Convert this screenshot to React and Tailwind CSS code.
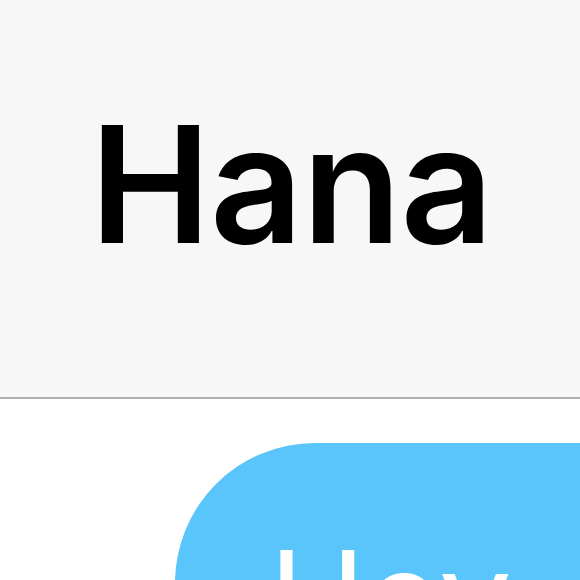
export default function App() {
  return (
    <div className="w-[580px] h-[580px] overflow-hidden bg-white" style={{ fontFamily: "Inter, 'Noto Sans', sans-serif" }}>
      <header className="bg-[#f7f7f8] border-b-2 border-[#b0b0b2] h-[399px] pl-[90px] pt-[103px]">
        <h1 className="text-[162px] leading-none font-semibold text-black tracking-[-0.005em]">Hana</h1>
      </header>
      <div className="pt-[44px] pl-[175px]">
        <div className="bg-[#5ac5fa] rounded-[160px] w-[700px] pl-[94px] pt-[90px] pb-[60px]">
          <span className="text-[130px] leading-none text-white">Hey</span>
        </div>
      </div>
    </div>
  );
}
